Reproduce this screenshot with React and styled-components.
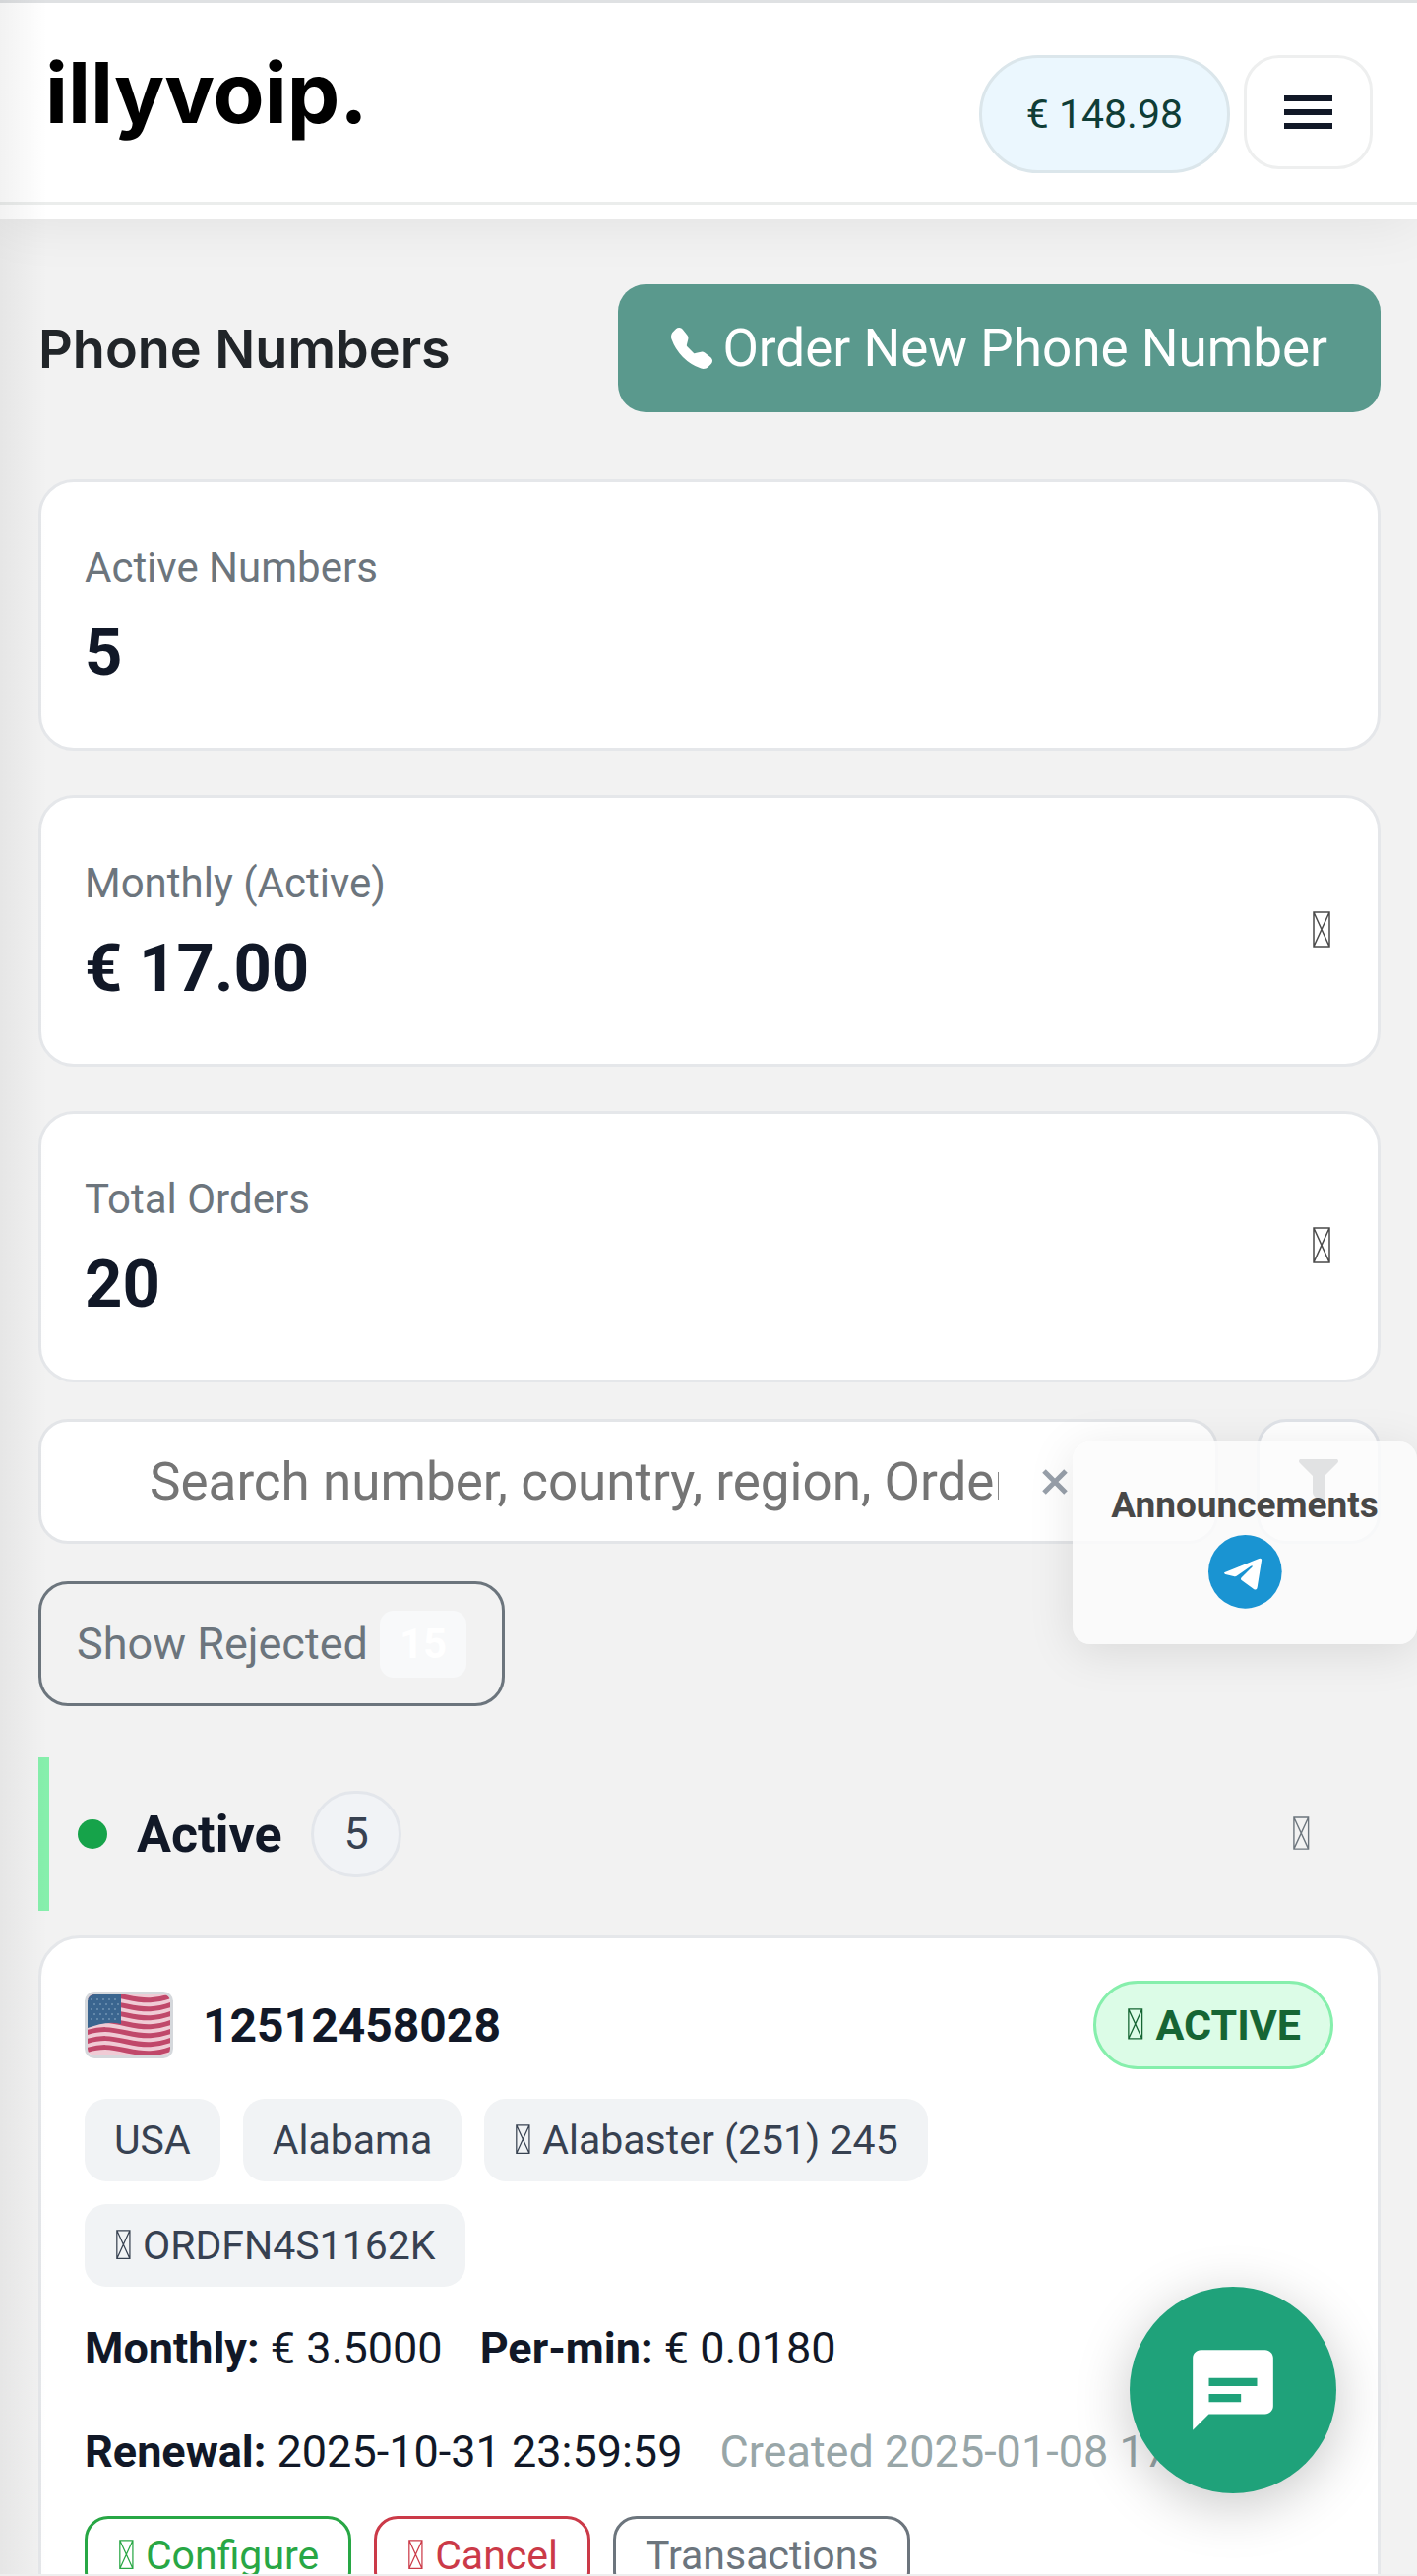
import React from 'react'
import styled, { createGlobalStyle } from 'styled-components'
import { BsTelephoneFill } from 'react-icons/bs'

const stats = [
  { label: 'Active Numbers', value: '5', icon: false },
  { label: 'Monthly (Active)', value: '€ 17.00', icon: true },
  { label: 'Total Orders', value: '20', icon: true },
]

const chips = [
  { text: 'USA' },
  { text: 'Alabama' },
  { text: 'Alabaster (251) 245', icon: true },
  { text: 'ORDFN4S1162K', icon: true },
]

const stripes = [0, 1, 2, 3, 4, 5, 6]

// crossed box shown where the icon font has no glyph
const Missing = () => (
  <MissingSvg viewBox="0 0 18 36" aria-hidden="true" preserveAspectRatio="none">
    <path d="M1 1h16v34H1zM1 1l16 34M17 1L1 35" />
  </MissingSvg>
)

const Flag = () => (
  <FlagSvg viewBox="0 0 84 62" preserveAspectRatio="none" role="img" aria-label="USA">
    <rect width="84" height="62" fill="#f0cbd5" />
    {stripes.map(i => (
      <path
        key={i}
        d={`M-2 ${i * 9 + 3}C14 ${i * 9 - 2} 22 ${i * 9 - 1} 40 ${i * 9 + 3}S70 ${i * 9 + 7} 86 ${i * 9 + 1}`}
        fill="none"
        stroke="#c0486a"
        strokeWidth="5"
      />
    ))}
    <path d="M0 0H34V30C22 27 12 30 0 34Z" fill="#3a658f" />
    <path
      d="M3 5H33M6 10H33M3 15H33M6 20H33M3 25H33"
      stroke="#6388aa"
      strokeWidth="2"
      strokeDasharray="2 4"
    />
  </FlagSvg>
)

const App = () => (
  <Page>
    <GlobalStyle />
    <Header>
      <Logo href="#">illyvoip.</Logo>
      <HeaderActions>
        <Balance href="#">€ 148.98</Balance>
        <MenuButton aria-label="Menu">
          <svg width="49" height="34" viewBox="0 0 49 34" fill="#111827">
            <path d="M0 0h49v6H0zM0 14h49v6H0zM0 28h49v6H0z" />
          </svg>
        </MenuButton>
      </HeaderActions>
    </Header>
    <Main>
      <TitleRow>
        <Title>Phone Numbers</Title>
        <OrderButton>
          <BsTelephoneFill size={42} />
          Order New Phone Number
        </OrderButton>
      </TitleRow>

      <Stats>
        {stats.map(stat => (
          <Stat key={stat.label}>
            <StatText>
              <StatLabel>{stat.label}</StatLabel>
              <StatValue>{stat.value}</StatValue>
            </StatText>
            {stat.icon && (
              <StatIcon>
                <Missing />
              </StatIcon>
            )}
          </Stat>
        ))}
      </Stats>

      <SearchRow>
        <SearchBox>
          <SearchInput
            type="text"
            aria-label="Search"
            placeholder="Search number, country, region, Order ID"
          />
          <ClearButton aria-label="Clear">
            <svg width="26" height="26" viewBox="0 0 26 26" stroke="#98a0aa" strokeWidth="5">
              <path d="M2 2l22 22M24 2L2 24" />
            </svg>
          </ClearButton>
        </SearchBox>
        <FilterButton aria-label="Filter">
          <svg width="40" height="46" viewBox="0 0 40 46" fill="#5a5f64">
            <path d="M1 0H39Q41 2 39 4L26 17V40Q26 46 21 43L16 38Q14 36 14 34V17L1 4Q-1 2 1 0Z" />
          </svg>
        </FilterButton>
        <Announcements>
          Announcements
          <TelegramLink href="#" aria-label="Telegram">
            <svg width="75" height="75" viewBox="0 0 225 225">
              <circle cx="112" cy="112" r="112" fill="#1a94d2" />
              <path
                d="M50 114L154 72Q164 68 162 79L149 160Q147 171 137 164L101 138Q97 134 101 130L133 98Q137 92 129 95L88 124Q83 128 77 126L52 120Q45 117 50 114Z"
                fill="white"
              />
            </svg>
          </TelegramLink>
        </Announcements>
      </SearchRow>

      <RejectedButton>
        Show Rejected
        <RejectedCount>15</RejectedCount>
      </RejectedButton>

      <SectionHead>
        <Dot />
        <SectionTitle>Active</SectionTitle>
        <SectionCount>5</SectionCount>
        <SectionIcon>
          <Missing />
        </SectionIcon>
      </SectionHead>

      <NumberCard>
        <CardHead>
          <FlagBox>
            <Flag />
          </FlagBox>
          <Number>12512458028</Number>
          <Status>
            <Missing /> ACTIVE
          </Status>
        </CardHead>
        <Chips>
          {chips.map(chip => (
            <Chip key={chip.text}>
              {chip.icon && <Missing />} {chip.text}
            </Chip>
          ))}
        </Chips>
        <Details>
          <span>
            <b>Monthly:</b> € 3.5000
          </span>
          <span>
            <b>Per-min:</b> € 0.0180
          </span>
        </Details>
        <Details>
          <span>
            <b>Renewal:</b> 2025-10-31 23:59:59
          </span>
          <Created>Created 2025-01-08 17:22:10</Created>
        </Details>
        <Actions>
          <Action color="#28a745">
            <Missing /> Configure
          </Action>
          <Action color="#cb3a48">
            <Missing /> Cancel
          </Action>
          <Action color="#6c757d">Transactions</Action>
        </Actions>
      </NumberCard>
    </Main>
    <SideShade />
    <ChatButton aria-label="Open chat">
      <svg width="98" height="98" viewBox="0 0 24 24" fill="white">
        <path d="M20 2H4C2.900 2 2 2.900 2 4V22L6 18H20C21.100 18 22 17.100 22 16V4C22 2.900 21.100 2 20 2ZM6 9H18V11H6ZM14 15H6V13H14Z" />
      </svg>
    </ChatButton>
  </Page>
)

const GlobalStyle = createGlobalStyle`
  * {
    box-sizing: border-box;
  }

  body {
    margin: 0;
    background: #f2f2f2;
    font-family: Roboto, "Liberation Sans", sans-serif;
    color: #111827;
  }

  button, input {
    margin: 0;
    font-family: inherit;
  }

  button {
    cursor: pointer;
  }
`

const Page = styled.div`
  position: relative;
  height: 100vh;
  overflow: hidden;
  border-bottom: 2px solid #eeeeee;
`

const Header = styled.header`
  display: flex;
  justify-content: space-between;
  align-items: flex-start;
  height: 223px;
  border-top: 3px solid #dfe1e3;
  padding: 53px 45px 0 46px;
  background: linear-gradient(#ebedec, #ebedec) 0 202px / 100% 3px no-repeat white;
  box-shadow: 0 0 56px rgba(0, 0, 0, 0.08);
`

const Logo = styled.a`
  color: black;
  font-family: Inter, "Liberation Sans", sans-serif;
  font-size: 85px;
  font-weight: 700;
  line-height: 78px;
  text-decoration: none;
`

const HeaderActions = styled.div`
  display: flex;
  align-items: flex-start;
  gap: 14px;
`

const Balance = styled.a`
  border: 3px solid #dbe6eb;
  border-radius: 60px;
  padding: 0 45px;
  background: #ebf7fe;
  color: #0f3d36;
  font-size: 41px;
  line-height: 114px;
  text-decoration: none;
`

const MenuButton = styled.button`
  display: flex;
  justify-content: center;
  align-items: center;
  width: 131px;
  height: 116px;
  border: 3px solid #eeefef;
  border-radius: 36px;
  background: white;
`

const Main = styled.main`
  padding: 66px 37px 0 39px;
`

const TitleRow = styled.div`
  display: flex;
  justify-content: space-between;
  align-items: center;
  margin-bottom: 68px;
`

const Title = styled.h1`
  margin: 0;
  color: #212529;
  font-family: Inter, "Liberation Sans", sans-serif;
  font-size: 54px;
  font-weight: 600;
`

const OrderButton = styled.button`
  display: flex;
  align-items: center;
  gap: 10px;
  height: 130px;
  border: none;
  border-radius: 28px;
  padding: 0 54px;
  background: #5a998d;
  color: white;
  font-size: 53px;
`

const Stats = styled.section`
  display: flex;
  flex-direction: column;
  gap: 45px;
  margin-bottom: 37px;
`

const Stat = styled.div`
  display: flex;
  justify-content: space-between;
  align-items: center;
  height: 276px;
  border: 3px solid #e5e7ea;
  border-radius: 36px;
  padding: 0 46px 0 44px;
  background: white;
`

const StatText = styled.div`
  padding-top: 10px;
`

const StatLabel = styled.div`
  color: #6c757d;
  font-size: 42px;
  line-height: 66px;
`

const StatValue = styled.div`
  font-size: 67px;
  font-weight: 700;
  line-height: 106px;
`

const StatIcon = styled.div`
  color: #4a4a4a;
  font-size: 50px;
`

const MissingSvg = styled.svg`
  width: 0.36em;
  height: 0.74em;
  margin: 0 2px;
  fill: none;
  stroke: currentColor;
  stroke-width: 1.5px;
`

const SearchRow = styled.div`
  position: relative;
  display: flex;
  gap: 39px;
  margin-bottom: 38px;
`

const SearchBox = styled.div`
  display: flex;
  flex: 1;
  height: 127px;
  border: 3px solid #e3e5e8;
  border-radius: 30px;
  padding: 0 150px 0 110px;
  background: white;
`

const SearchInput = styled.input`
  flex: 1;
  min-width: 0;
  border: none;
  padding: 0;
  background: transparent;
  font-size: 53px;
  outline: none;

  &::placeholder {
    color: #757575;
  }
`

const ClearButton = styled.button`
  display: flex;
  align-items: center;
  border: none;
  padding: 0 0 0 44px;
  background: none;
`

const FilterButton = styled.button`
  display: flex;
  justify-content: center;
  align-items: center;
  width: 126px;
  border: 3px solid #e0e3e8;
  border-radius: 30px;
  background: white;
`

const Announcements = styled.aside`
  position: absolute;
  top: 23px;
  right: -37px;
  z-index: 1;
  display: flex;
  flex-direction: column;
  align-items: center;
  gap: 7px;
  width: 350px;
  height: 206px;
  border-radius: 18px;
  padding-top: 42px;
  background: rgba(251, 251, 251, 0.84);
  box-shadow: 0 8px 48px rgba(0, 0, 0, 0.1);
  color: #484848;
  font-size: 37px;
  font-weight: 700;
  line-height: 46px;
`

const TelegramLink = styled.a`
  line-height: 0;
`

const RejectedButton = styled.button`
  display: flex;
  align-items: center;
  gap: 12px;
  height: 127px;
  margin-bottom: 52px;
  border: 3px solid #6c757d;
  border-radius: 30px;
  padding: 0 36px;
  background: transparent;
  color: #6c757d;
  font-size: 45px;
`

const RejectedCount = styled.span`
  border-radius: 14px;
  padding: 0 20px;
  background: #f8f9fa;
  color: white;
  font-size: 42px;
  font-weight: 700;
  line-height: 68px;
`

const SectionHead = styled.div`
  display: flex;
  align-items: center;
  height: 156px;
  margin-bottom: 25px;
  border-left: 11px solid #86efac;
  padding: 0 70px 0 29px;
`

const Dot = styled.span`
  width: 30px;
  height: 30px;
  border-radius: 50%;
  background: #16a34a;
`

const SectionTitle = styled.h2`
  margin: 0 30px;
  font-size: 52px;
  font-weight: 700;
`

const SectionCount = styled.span`
  border: 3px solid #e3e6eb;
  border-radius: 45px;
  padding: 0 30px;
  background: #f1f3f6;
  color: #374151;
  font-size: 45px;
  line-height: 82px;
`

const SectionIcon = styled.span`
  margin-left: auto;
  color: #6c757d;
  font-size: 46px;
`

const NumberCard = styled.article`
  border: 3px solid #e5e7ea;
  border-radius: 42px;
  padding: 43px 45px 44px 44px;
  background: white;
`

const CardHead = styled.div`
  display: flex;
  align-items: center;
  margin-bottom: 30px;
`

const FlagBox = styled.div`
  width: 90px;
  height: 68px;
  border: 3px solid #d5d8dc;
  border-radius: 10px;
  overflow: hidden;
`

const FlagSvg = styled.svg`
  display: block;
  width: 100%;
  height: 100%;
`

const Number = styled.div`
  margin-left: 30px;
  font-size: 48px;
  font-weight: 700;
`

const Status = styled.div`
  margin-left: auto;
  border: 3px solid #86efac;
  border-radius: 45px;
  padding: 0 30px;
  background: #dcfce7;
  color: #166534;
  font-size: 43px;
  font-weight: 700;
  line-height: 84px;
`

const Chips = styled.div`
  display: flex;
  flex-wrap: wrap;
  gap: 23px;
  margin-bottom: 30px;
  padding-right: 30px;
`

const Chip = styled.span`
  border-radius: 22px;
  padding: 0 30px;
  background: #f1f3f5;
  color: #374151;
  font-size: 41px;
  line-height: 84px;
`

const Details = styled.div`
  display: flex;
  gap: 38px;
  margin-bottom: 39px;
  font-size: 45px;
  line-height: 66px;
  white-space: nowrap;
`

const Created = styled.span`
  color: #98a6a8;
`

const Actions = styled.div`
  display: flex;
  gap: 23px;
  margin-top: -7px;
`

const Action = styled.button`
  height: 80px;
  border: 3px solid ${props => props.color};
  border-radius: 24px;
  padding: 0 30px;
  background: transparent;
  color: ${props => props.color};
  font-size: 41px;
`

const SideShade = styled.div`
  position: absolute;
  top: 0;
  bottom: 0;
  left: 0;
  width: 48px;
  background: linear-gradient(to right, rgba(0, 0, 0, 0.05), rgba(0, 0, 0, 0));
  pointer-events: none;
`

const ChatButton = styled.button`
  position: fixed;
  right: 82px;
  bottom: 84px;
  display: flex;
  justify-content: center;
  align-items: center;
  width: 210px;
  height: 210px;
  border: none;
  border-radius: 50%;
  padding: 0;
  background: #1fa27a;
  box-shadow: 0 12px 56px rgba(0, 0, 0, 0.22);
`

export default App
